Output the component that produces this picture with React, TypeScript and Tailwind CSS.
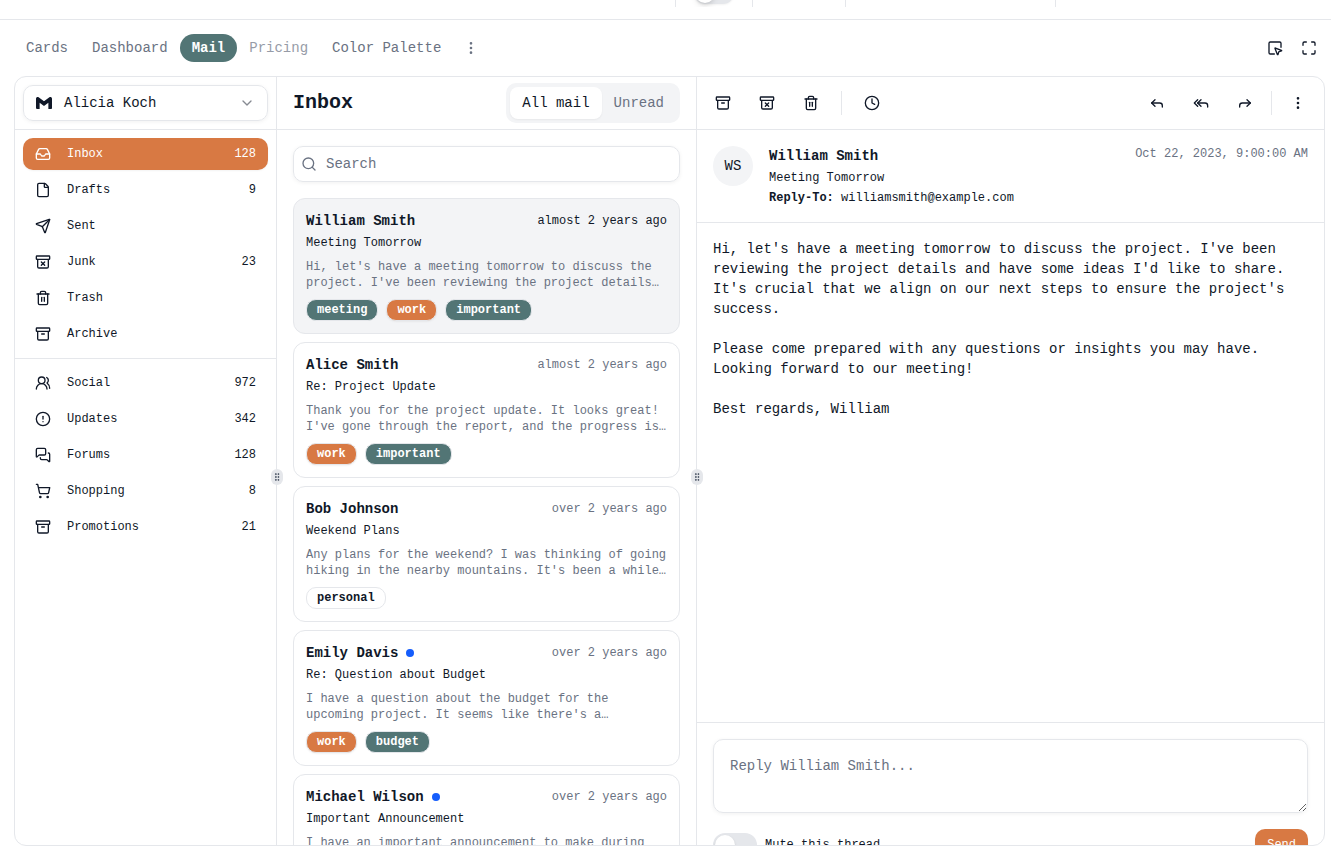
import { useState } from "react";
import type { ReactNode } from "react";
import {
  Archive,
  ArchiveX,
  ChevronDown,
  CircleAlert,
  Clock,
  EllipsisVertical,
  File,
  Forward,
  GripVertical,
  Inbox,
  Maximize,
  MessagesSquare,
  Reply,
  ReplyAll,
  Search,
  Send,
  ShoppingCart,
  SquareMousePointer,
  Trash2,
  UsersRound,
} from "lucide-react";
import type { LucideIcon } from "lucide-react";

type Folder = { name: string; count?: number; icon: LucideIcon; active?: boolean };

const folders: Folder[] = [
  { name: "Inbox", count: 128, icon: Inbox, active: true },
  { name: "Drafts", count: 9, icon: File },
  { name: "Sent", icon: Send },
  { name: "Junk", count: 23, icon: ArchiveX },
  { name: "Trash", icon: Trash2 },
  { name: "Archive", icon: Archive },
];

const categories: Folder[] = [
  { name: "Social", count: 972, icon: UsersRound },
  { name: "Updates", count: 342, icon: CircleAlert },
  { name: "Forums", count: 128, icon: MessagesSquare },
  { name: "Shopping", count: 8, icon: ShoppingCart },
  { name: "Promotions", count: 21, icon: Archive },
];

const mails = [
  {
    name: "William Smith",
    subject: "Meeting Tomorrow",
    age: "almost 2 years ago",
    preview:
      "Hi, let's have a meeting tomorrow to discuss the project. I've been reviewing the project details…",
    labels: ["meeting", "work", "important"],
    read: true,
  },
  {
    name: "Alice Smith",
    subject: "Re: Project Update",
    age: "almost 2 years ago",
    preview:
      "Thank you for the project update. It looks great! I've gone through the report, and the progress is…",
    labels: ["work", "important"],
    read: true,
  },
  {
    name: "Bob Johnson",
    subject: "Weekend Plans",
    age: "over 2 years ago",
    preview:
      "Any plans for the weekend? I was thinking of going hiking in the nearby mountains. It's been a while…",
    labels: ["personal"],
    read: true,
  },
  {
    name: "Emily Davis",
    subject: "Re: Question about Budget",
    age: "over 2 years ago",
    preview:
      "I have a question about the budget for the upcoming project. It seems like there's a…",
    labels: ["work", "budget"],
    read: false,
  },
  {
    name: "Michael Wilson",
    subject: "Important Announcement",
    age: "over 2 years ago",
    preview:
      "I have an important announcement to make during our team meeting. It pertains to a strategic…",
    labels: ["meeting", "work", "important"],
    read: false,
  },
];

function FolderList({ items }: { items: Folder[] }) {
  return (
    <nav className="flex flex-col gap-1 p-2">
      {items.map(({ name, count, icon: Icon, active }) => (
        <a
          key={name}
          href="#"
          className={`flex h-8 items-center rounded-[10px] px-3 text-xs font-medium ${
            active ? "bg-[#d87943] text-white shadow-xs" : ""
          }`}
        >
          <Icon className="mr-4 size-4" />
          {name}
          <span className="ml-auto">{count}</span>
        </a>
      ))}
    </nav>
  );
}

function Label({ text }: { text: string }) {
  const look =
    text === "work"
      ? "bg-[#d87943] text-white shadow-xs"
      : text === "personal"
        ? ""
        : "bg-[#527575] text-white";
  return (
    <span
      className={`rounded-[10px] border border-gray-200 px-2.5 py-0.5 text-xs font-semibold ${look}`}
    >
      {text}
    </span>
  );
}

function IconButton({ label, children }: { label: string; children: ReactNode }) {
  return (
    <button type="button" aria-label={label} className="flex size-9 items-center justify-center">
      {children}
    </button>
  );
}

function Handle() {
  return (
    <div className="relative w-px shrink-0 bg-gray-200">
      <div className="absolute top-1/2 left-1/2 z-10 flex h-4 w-3 -translate-1/2 translate-y-2 items-center justify-center rounded-md bg-gray-200">
        <GripVertical className="size-2.5 text-gray-700" />
      </div>
    </div>
  );
}

export default function App() {
  const [muted, setMuted] = useState(false);
  const [tab, setTab] = useState("All mail");

  return (
    <div className="flex h-screen flex-col overflow-hidden bg-white font-['Liberation_Mono',monospace] text-sm text-gray-900">
      <header className="flex h-5 shrink-0 items-start justify-end border-b border-gray-200 pr-[275px]">
        <div className="flex h-[7px] overflow-hidden">
          <div className="flex w-[77px] items-end border-l border-gray-200 pl-[18px]">
            <div className="mb-[3px] flex h-[22px] w-10 shrink-0 items-center rounded-full bg-gray-200 p-px shadow-xs">
              <div className="size-5 rounded-full bg-white shadow-md" />
            </div>
          </div>
          <div className="w-[93px] border-l border-gray-200" />
          <div className="w-[211px] border-x border-gray-200" />
        </div>
      </header>

      <div className="flex shrink-0 items-center justify-between p-3.5">
        <nav className="flex items-center font-medium text-gray-500">
          <a href="#" className="px-3 py-1">Cards</a>
          <a href="#" className="px-3 py-1">Dashboard</a>
          <a href="#" className="rounded-full bg-[#527575] px-3 py-1 font-semibold text-white">Mail</a>
          <a href="#" className="px-3 py-1 opacity-70">Pricing</a>
          <a href="#" className="px-3 py-1">Color Palette</a>
          <button type="button" aria-label="More" className="ml-1.5 p-1">
            <EllipsisVertical className="size-4" />
          </button>
        </nav>
        <div className="flex items-center gap-[18px]">
          <button type="button" aria-label="Inspect">
            <SquareMousePointer className="size-4" />
          </button>
          <button type="button" aria-label="Fullscreen">
            <Maximize className="size-4" />
          </button>
        </div>
      </div>

      <main className="mr-1.5 mb-2 ml-3.5 flex min-h-0 flex-1 overflow-hidden rounded-xl border border-gray-200">
        <aside className="min-w-0 flex-[261]">
          <div className="h-[53px] border-b border-gray-200 p-2">
            <button
              type="button"
              className="flex h-9 w-full items-center gap-3 rounded-[10px] border border-gray-200 px-3 shadow-[0_1px_4px_0_rgb(0_0_0/0.06)]"
            >
              <svg viewBox="0 0 24 24" className="size-4" fill="currentColor">
                <path d="M24 5.457v13.909c0 .904-.732 1.636-1.636 1.636h-3.819V11.73L12 16.64l-6.545-4.91v9.273H1.636A1.636 1.636 0 0 1 0 19.366V5.457c0-2.023 2.309-3.178 3.927-1.964L5.455 4.64 12 9.548l6.545-4.91 1.528-1.145C21.69 2.28 24 3.434 24 5.457z" />
              </svg>
              Alicia Koch
              <ChevronDown className="ml-auto size-4 opacity-50" />
            </button>
          </div>
          <FolderList items={folders} />
          <div className="border-t border-gray-200" />
          <FolderList items={categories} />
        </aside>
        <Handle />

        <section className="flex min-w-0 flex-[419] flex-col">
          <div className="flex h-[53px] shrink-0 items-center justify-between border-b border-gray-200 px-4">
            <h1 className="text-xl font-bold">Inbox</h1>
            <div className="flex h-10 rounded-[10px] bg-gray-100 p-1 font-medium">
              {["All mail", "Unread"].map((name) => (
                <button
                  key={name}
                  type="button"
                  onClick={() => setTab(name)}
                  className={`rounded-lg px-3 ${tab === name ? "bg-white shadow-xs" : "text-gray-500"}`}
                >
                  {name}
                </button>
              ))}
            </div>
          </div>
          <form className="p-4">
            <label className="flex h-9 items-center gap-[9px] rounded-[10px] border border-gray-200 px-[7px] shadow-[0_1px_4px_0_rgb(0_0_0/0.06)]">
              <Search className="size-4 text-gray-500" />
              <input
                aria-label="Search"
                placeholder="Search"
                className="min-w-0 flex-1 outline-none placeholder:text-gray-500"
              />
            </label>
          </form>
          <div className="flex min-h-0 flex-1 flex-col gap-2 overflow-hidden px-4">
            {mails.map((mail, i) => (
              <button
                key={mail.name}
                type="button"
                className={`flex shrink-0 flex-col items-start gap-2 rounded-xl border border-gray-200 p-3 text-left ${
                  i === 0 ? "bg-gray-100" : ""
                }`}
              >
                <div className="flex w-full flex-col gap-1">
                  <div className="flex items-center">
                    <span className="font-semibold">{mail.name}</span>
                    {!mail.read && <span className="ml-2 size-2 rounded-full bg-blue-600" />}
                    <span className={`ml-auto text-xs ${i === 0 ? "" : "text-gray-500"}`}>
                      {mail.age}
                    </span>
                  </div>
                  <div className="text-xs font-medium">{mail.subject}</div>
                </div>
                <p className="line-clamp-2 text-xs text-gray-500">{mail.preview}</p>
                <div className="flex gap-2">
                  {mail.labels.map((l) => (
                    <Label key={l} text={l} />
                  ))}
                </div>
              </button>
            ))}
          </div>
        </section>
        <Handle />

        <section className="flex min-w-0 flex-[627] flex-col">
          <div className="flex h-[53px] shrink-0 items-center gap-2 border-b border-gray-200 px-2">
            <IconButton label="Archive"><Archive className="size-4" /></IconButton>
            <IconButton label="Move to junk"><ArchiveX className="size-4" /></IconButton>
            <IconButton label="Move to trash"><Trash2 className="size-4" /></IconButton>
            <div className="mx-1 h-6 w-px bg-gray-200" />
            <IconButton label="Snooze"><Clock className="size-4" /></IconButton>
            <div className="ml-auto flex items-center gap-2">
              <IconButton label="Reply"><Reply className="size-4" /></IconButton>
              <IconButton label="Reply all"><ReplyAll className="size-4" /></IconButton>
              <IconButton label="Forward"><Forward className="size-4" /></IconButton>
            </div>
            <div className="h-6 w-px bg-gray-200" />
            <IconButton label="More"><EllipsisVertical className="size-4" /></IconButton>
          </div>

          <div className="flex shrink-0 items-start gap-4 border-b border-gray-200 p-4">
            <div className="flex size-10 shrink-0 items-center justify-center rounded-full bg-gray-100">
              WS
            </div>
            <div className="flex flex-col gap-1 text-xs">
              <div className="text-sm font-semibold">William Smith</div>
              <div>Meeting Tomorrow</div>
              <div>
                <span className="font-semibold">Reply-To:</span> williamsmith@example.com
              </div>
            </div>
            <time className="ml-auto text-xs text-gray-500">Oct 22, 2023, 9:00:00 AM</time>
          </div>

          <div className="flex-1 p-4 whitespace-pre-wrap">
            {`Hi, let's have a meeting tomorrow to discuss the project. I've been reviewing the project details and have some ideas I'd like to share. It's crucial that we align on our next steps to ensure the project's success.

Please come prepared with any questions or insights you may have. Looking forward to our meeting!

Best regards, William`}
          </div>

          <form className="h-[123px] shrink-0 overflow-hidden border-t border-gray-200 p-4">
            <textarea
              aria-label="Reply"
              placeholder="Reply William Smith..."
              className="block h-[74px] w-full rounded-[10px] border border-gray-200 p-4 shadow-[0_1px_4px_0_rgb(0_0_0/0.06)] outline-none placeholder:text-gray-500"
            />
            <div className="mt-4 flex items-center justify-between">
              <label className="flex items-center gap-2 text-xs">
                <input
                  type="checkbox"
                  role="switch"
                  checked={muted}
                  onChange={(e) => setMuted(e.target.checked)}
                  className="h-6 w-11 appearance-none rounded-full bg-gray-200 p-0.5 before:block before:size-5 before:rounded-full before:bg-white before:shadow-sm checked:bg-[#d87943] checked:before:translate-x-5"
                />
                Mute this thread
              </label>
              <button
                type="button"
                className="h-8 rounded-[10px] bg-[#d87943] px-3 text-xs font-medium text-white shadow-xs"
              >
                Send
              </button>
            </div>
          </form>
        </section>
      </main>
    </div>
  );
}
